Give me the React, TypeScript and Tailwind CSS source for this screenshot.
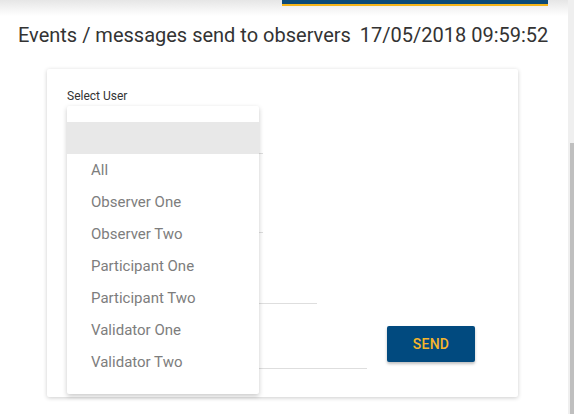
const users = [
  "All",
  "Observer One",
  "Observer Two",
  "Participant One",
  "Participant Two",
  "Validator One",
  "Validator Two",
];

const App = () => {
  return (
    <div className="flex h-[414px] w-[574px] overflow-hidden bg-white font-['Roboto',sans-serif]">
      <div className="flex-1">
        {/* header shadow + brand bar */}
        <div className="h-[16px] bg-linear-to-b from-[#e6e6e6] to-white">
          <div className="ml-[282px] h-[6px] w-[266px] border-b-2 border-[#f4b41a] bg-[#0b4a78]" />
        </div>

        <h1 className="ml-[18px] mt-[7px] text-[20px] leading-[24px] font-normal text-[#333]">
          Events / messages send to observers <span className="ml-[4px]">17/05/2018 09:59:52</span>
        </h1>

        <div className="relative ml-[47px] mt-[22px] h-[328px] w-[471px] rounded-[2px] bg-white px-5 pt-5 shadow-[0_1px_4px_rgba(0,0,0,0.2)]">
          <label className="block text-[12px] leading-[14px] text-[#333]">Select User</label>
          <div className="h-[51px] w-[196px] border-b border-[#dedede]" />
          <div className="h-[79px] w-[196px] border-b border-[#dedede]" />
          <div className="h-[71px] w-[250px] border-b border-[#dedede]" />
          <div className="flex items-start">
            <div className="h-[65px] w-[300px] border-b border-[#dedede]" />
            <button className="ml-5 mt-[22px] h-[36px] w-[88px] rounded-[2px] bg-[#014a7f] text-[14px] font-medium tracking-[0.3px] text-[#f7b52c] shadow-[0_2px_3px_rgba(0,0,0,0.25)]">
              SEND
            </button>
          </div>

          {/* open select panel */}
          <div className="absolute left-5 top-[37px] w-[192px] rounded-[2px] bg-white py-4 shadow-[0_2px_5px_rgba(0,0,0,0.22)]">
            <div className="h-8 bg-[#e8e8e8]" />
            {users.map((u) => (
              <div key={u} className="flex h-8 items-center pl-6 text-[15px] text-[#7d7d7d]">
                {u}
              </div>
            ))}
          </div>
        </div>
      </div>

      {/* scrollbar */}
      <div className="flex w-[6px] flex-col bg-[#efefef] pl-[2px]">
        <div className="h-[143px]" />
        <div className="flex-1 bg-[#bfbfbf]" />
      </div>
    </div>
  );
};

export default App;
